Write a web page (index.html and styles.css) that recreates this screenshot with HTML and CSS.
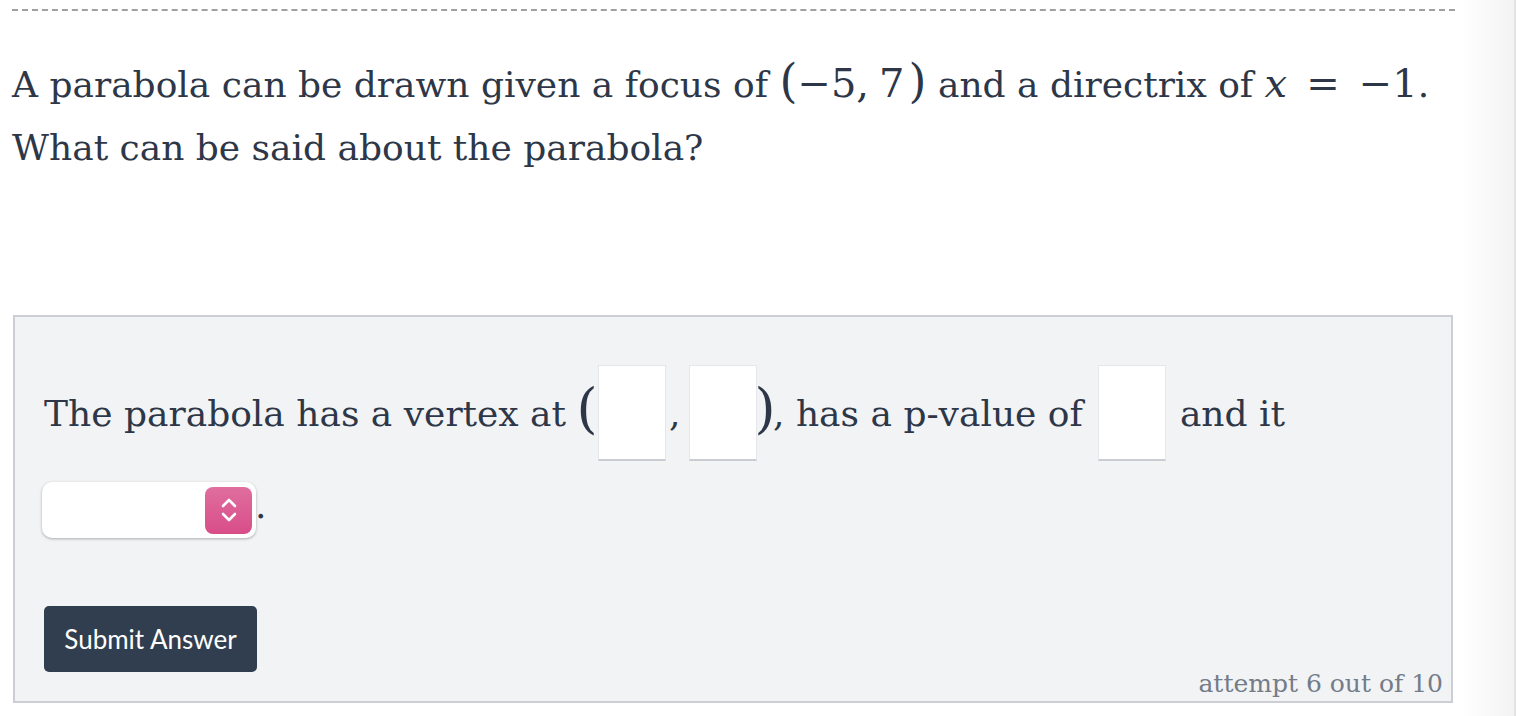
FILE: index.html
```html
<!DOCTYPE html>
<html lang="en">
<head>
    <meta charset="UTF-8">
    <meta name="viewport" content="width=device-width, initial-scale=1.0">
    <title>Parabola Question</title>
    <link rel="stylesheet" href="styles.css">
</head>
<body>
    <div class="page">
        <div class="main">
            <hr class="divider">

            <p class="question">
                A parabola can be drawn given a focus of
                <span class="math"><span class="paren">(</span>−5,<span class="thin"></span>7<span class="paren close">)</span></span>
                and a directrix of
                <span class="math"><i>x</i><span class="rel">=</span>−1</span>.
                <br>
                What can be said about the parabola?
            </p>

            <div class="panel">
                <div class="sentence">
                    <span>The parabola has a vertex at</span>
                    <span class="big-paren open">(</span>
                    <input class="blank" type="text">
                    <span class="comma">,</span>
                    <input class="blank" type="text">
                    <span class="big-paren close">)</span>
                    <span>, has a p-value of</span>
                    <input class="blank pval" type="text">
                    <span>and it</span>
                    <span class="break"></span>
                    <div class="dropdown">
                        <span class="dropdown-btn">
                            <svg width="18" height="28" viewBox="0 0 18 28">
                                <!-- up and down chevrons -->
                                <path d="M3 10 L9 4 L15 10" fill="none" stroke="#fff" stroke-width="2.6" stroke-linecap="round" stroke-linejoin="round"/>
                                <path d="M3 18 L9 24 L15 18" fill="none" stroke="#fff" stroke-width="2.6" stroke-linecap="round" stroke-linejoin="round"/>
                            </svg>
                        </span>
                    </div>
                    <span class="dot">.</span>
                </div>

                <button class="submit">Submit Answer</button>
                <div class="attempt">attempt 6 out of 10</div>
            </div>
        </div>
        <div class="rail"></div>
    </div>
</body>
</html>
```

FILE: styles.css
```css
body {
    margin: 0;
    background-color: #ffffff;
    font-family: "DejaVu Serif", Georgia, serif;
    color: #2d3748;
}

.page {
    display: flex;
    height: 716px;
    overflow: hidden;
}

.main {
    width: 1462px;
    padding: 0 7px 0 12px;
    box-sizing: border-box;
}

.rail {
    flex: 1;
    background: linear-gradient(to right, #ffffff, #f3f3f3);
    border-right: 2px solid #e4e4e4;
}

.divider {
    border: none;
    border-top: 2px dashed #a0a0a0;
    margin: 9px 0 0 0;
    width: 1443px;
}

.question {
    font-size: 36px;
    line-height: 63px;
    margin: 39px 0 0 0;
}

.math {
    font-size: 40px;
}

.math .paren {
    font-size: 46px;
    font-weight: 300;
}

.math .paren.close {
    margin-left: 4px;
}

.math .thin {
    display: inline-block;
    width: 10px;
}

.math .rel {
    margin: 0 19px;
}

.panel {
    margin: 136px 0 0 1px;
    width: 1440px;
    box-sizing: border-box;
    border: 2px solid #cbcfd5;
    background-color: #f2f3f5;
    padding: 48px 8px 5px 29px;
}

.sentence {
    display: flex;
    flex-wrap: wrap;
    align-items: center;
    font-size: 36px;
}

.blank {
    width: 68px;
    height: 96px;
    box-sizing: border-box;
    border: 1px solid #e6e7ea;
    border-bottom: 2px solid #c9ccd1;
    background-color: #ffffff;
    padding: 0;
}

/* tall delimiters around the vertex blanks */
.big-paren {
    width: 16px;
    display: flex;
    justify-content: center;
    font-size: 54px;
    font-weight: 300;
    line-height: 1;
    margin-bottom: 8px;
}

.big-paren.open {
    margin: 0 3px 8px 13px;
}

.comma {
    width: 20px;
    padding-left: 3px;
}

.pval {
    margin: 0 14px 0 15px;
}

.break {
    flex-basis: 100%;
    height: 0;
}

.dropdown {
    width: 214px;
    height: 56px;
    box-sizing: border-box;
    background-color: #ffffff;
    border-radius: 10px;
    box-shadow: 0 1px 3px rgba(0, 0, 0, 0.3);
    display: flex;
    justify-content: flex-end;
    align-items: center;
    padding-right: 4px;
    margin: 21px 0 0 -2px;
}

.dropdown-btn {
    width: 47px;
    height: 47px;
    border-radius: 8px;
    background: linear-gradient(#e06e9f, #d84d88);
    display: flex;
    align-items: center;
    justify-content: center;
}

.dot {
    font-size: 36px;
    margin: 12px 0 0 -1px;
}

.submit {
    display: block;
    margin-top: 68px;
    width: 213px;
    height: 66px;
    border: none;
    border-radius: 5px;
    background-color: #313e4f;
    color: #ffffff;
    font-family: Lato, sans-serif;
    font-size: 26px;
    cursor: pointer;
}

.attempt {
    text-align: right;
    color: #737c88;
    font-size: 25px;
    line-height: 24px;
}
```
